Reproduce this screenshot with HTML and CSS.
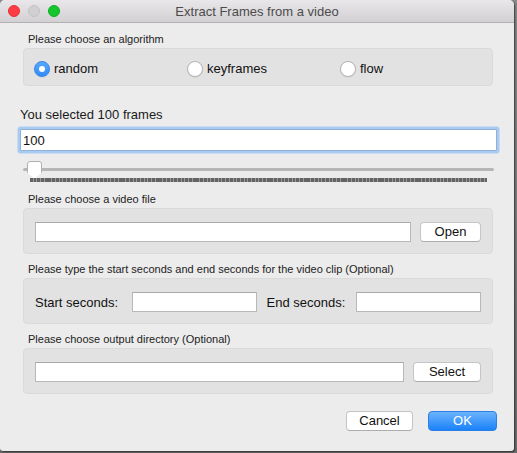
FILE: index.html
```html
<!DOCTYPE html>
<html>
<head>
<meta charset="utf-8">
<link rel="stylesheet" href="styles.css">
</head>
<body>
<div class="window">
  <div class="titlebar">
    <div class="lights">
      <span class="light red"></span>
      <span class="light gray"></span>
      <span class="light green"></span>
    </div>
    <div class="title">Extract Frames from a video</div>
  </div>
  <div class="content">
    <div class="glabel first">Please choose an algorithm</div>
    <div class="box radios">
      <label class="radio"><span class="dot on"></span>random</label>
      <label class="radio"><span class="dot"></span>keyframes</label>
      <label class="radio"><span class="dot"></span>flow</label>
    </div>

    <div class="frames">
      <div class="selected">You selected 100 frames</div>
      <div class="numinput">100</div>
      <div class="slider">
        <div class="track"></div>
        <div class="thumb"></div>
        <div class="ticks"></div>
      </div>
    </div>

    <div class="glabel g2">Please choose a video file</div>
    <div class="box row">
      <div class="field wide1"></div>
      <div class="btn open">Open</div>
    </div>

    <div class="glabel g3">Please type the start seconds and end seconds for the video clip (Optional)</div>
    <div class="box row">
      <span class="flabel">Start seconds:</span>
      <div class="field sec"></div>
      <span class="flabel endl">End seconds:</span>
      <div class="field sec"></div>
    </div>

    <div class="glabel g3">Please choose output directory (Optional)</div>
    <div class="box row">
      <div class="field wide2"></div>
      <div class="btn select">Select</div>
    </div>

    <div class="footer">
      <div class="btn cancel">Cancel</div>
      <div class="btn ok">OK</div>
    </div>
  </div>
</div>
</body>
</html>
```

FILE: styles.css
```css
html, body {
  margin: 0;
  padding: 0;
}
body {
  width: 517px;
  height: 453px;
  background: linear-gradient(#8a8a8a, #6e6e6e);
  font-family: "Liberation Sans", Arial, sans-serif;
  color: #1e1e1e;
  overflow: hidden;
}
.window {
  width: 514px;
  height: 451px;
  background: #ececec;
  border-radius: 5px 5px 3px 3px;
  overflow: hidden;
  box-shadow: 1px 1px 2px rgba(0,0,0,0.6);
}
.titlebar {
  height: 22px;
  background: linear-gradient(#e9e7e9, #d2d0d2);
  border-bottom: 1px solid #b3b1b3;
  display: flex;
  align-items: center;
  position: relative;
}
.lights {
  display: flex;
  gap: 8px;
  padding-left: 8px;
}
.light {
  width: 12px;
  height: 12px;
  border-radius: 50%;
  box-sizing: border-box;
}
.light.red { background: #fc3d43; border: 1px solid #e23238; }
.light.gray { background: #d0d0d0; border: 1px solid #c2c2c2; }
.light.green { background: #14c72c; border: 1px solid #10ac24; }
.title {
  position: absolute;
  left: 0;
  right: 0;
  top: 0;
  line-height: 23px;
  text-align: center;
  font-size: 13px;
  color: #4b4b4b;
}
.content {
  padding-left: 23px;
  width: 470px;
}
.glabel {
  font-size: 11px;
  line-height: 14px;
  padding-left: 5px;
  color: #222;
}
.glabel.first { margin-top: 9px; }
.glabel.g2 { margin-top: 9px; }
.glabel.g3 { margin-top: 8px; }
.box {
  margin-top: 2px;
  background: #e2e2e2;
  border: 1px solid #dadada;
  border-radius: 4px;
  box-sizing: border-box;
}
.radios {
  height: 38px;
  display: grid;
  grid-template-columns: 153px 153px 153px;
  padding-left: 10px;
  padding-top: 3px;
  align-items: center;
}
.radio {
  display: flex;
  align-items: center;
  gap: 4px;
  font-size: 13px;
  color: #111;
}
.dot {
  width: 16px;
  height: 16px;
  border-radius: 50%;
  box-sizing: border-box;
  background: #fff;
  border: 1px solid #b4b4b4;
  box-shadow: 0 0.5px 1px rgba(0,0,0,0.1);
  display: flex;
  align-items: center;
  justify-content: center;
}
.dot.on {
  background: linear-gradient(#5aa9fc, #2e8cf8);
  border-color: #2f86ea;
}
.dot.on::after {
  content: "";
  width: 6px;
  height: 6px;
  border-radius: 50%;
  background: #fff;
}
.frames {
  margin-left: -3px;
}
.selected {
  margin-top: 21px;
  font-size: 13px;
  line-height: 16px;
  color: #1a1a1a;
}
.numinput {
  margin-top: 6px;
  width: 477px;
  height: 22px;
  box-sizing: border-box;
  background: #fff;
  border: 1px solid #8fb1da;
  box-shadow: 0 0 0 2.5px #a9cbf3;
  border-radius: 1px;
  font-size: 13px;
  line-height: 21px;
  padding-left: 2px;
  color: #111;
}
.slider {
  position: relative;
  height: 22px;
  margin-top: 10px;
}
.track {
  position: absolute;
  left: 3px;
  width: 471px;
  top: 7px;
  height: 3px;
  border-radius: 2px;
  background: #b6b6b6;
}
.thumb {
  position: absolute;
  left: 7px;
  top: 0;
  width: 15px;
  height: 18px;
  background: #fff;
  border: 1px solid #b0b0b0;
  box-sizing: border-box;
  clip-path: polygon(0 0, 100% 0, 100% 62%, 50% 100%, 0 62%);
  border-radius: 3px 3px 0 0;
}
.ticks {
  position: absolute;
  left: 10px;
  width: 457px;
  top: 17px;
  height: 4px;
  background: repeating-linear-gradient(90deg, #646464 0, #646464 2.7px, #9a9a9a 2.7px, #9a9a9a 3.7px);
}
.row {
  display: flex;
  align-items: center;
  padding: 13px 11px 11px 11px;
}
.field {
  height: 20px;
  box-sizing: border-box;
  background: #fff;
  border: 1px solid #b8b8b8;
  border-top-color: #a9a9a9;
}
.wide1 { width: 376px; }
.wide2 { width: 369px; }
.sec { width: 125px; }
.btn {
  height: 20px;
  box-sizing: border-box;
  background: #fff;
  border: 1px solid #c5c5c5;
  border-bottom-color: #adadad;
  border-radius: 4px;
  font-size: 13px;
  line-height: 18px;
  text-align: center;
  color: #111;
}
.open { width: 61px; margin-left: 9px; }
.select { width: 68px; margin-left: 9px; }
.flabel {
  font-size: 13px;
  color: #111;
  width: 97px;
}
.endl {
  margin-left: 10px;
  width: 90px;
}
.footer {
  margin-top: 17px;
  display: flex;
  justify-content: flex-end;
  gap: 15px;
  margin-right: -4px;
}
.cancel { width: 67px; }
.ok {
  width: 69px;
  background: linear-gradient(#6cb3fa, #1a82fb);
  border: 1px solid #2a7fe6;
  color: #fff;
}
```
